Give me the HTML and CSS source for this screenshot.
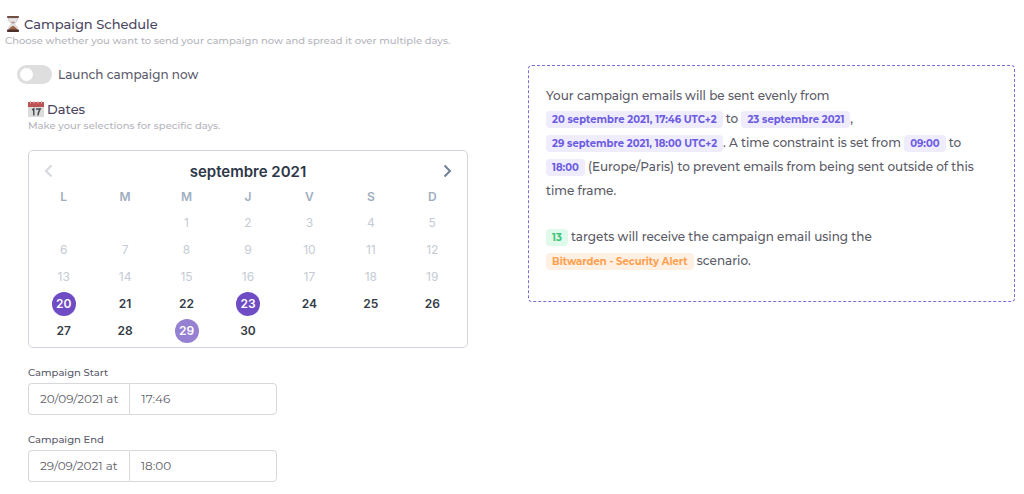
FILE: index.html
```html
<!DOCTYPE html>
<html lang="en">
<head>
    <meta charset="UTF-8">
    <meta name="viewport" content="width=device-width, initial-scale=1.0">
    <title>Campaign Schedule</title>
    <link rel="stylesheet" href="styles.css">
</head>
<body>
    <header>
        <h1 class="title">
            <svg class="icon" viewBox="0 0 16 18" aria-hidden="true">
                <path d="M3.500 3h9c0 3-1 4.200-3.500 6 2.500 1.800 3.500 3 3.500 6h-9c0-3 1-4.200 3.500-6C4.500 7.200 3.500 6 3.500 3z" fill="#e9e6e6" stroke="#b9b4b4" stroke-width=".6"/>
                <path d="M6 6.800h4c-.5.700-1 1.200-2 1.900-1-.7-1.500-1.200-2-1.900z" fill="#a58a7c"/>
                <path d="M8 10.500c.6 1.200 4 2 4.200 4.500H3.800C4 12.500 7.400 11.700 8 10.500z" fill="#9a6347"/>
                <rect x="2" y="1" width="12" height="2" rx=".8" fill="#6e5045"/>
                <rect x="2" y="14.600" width="12" height="2.400" rx=".8" fill="#4c3028"/>
            </svg>
            Campaign Schedule
        </h1>
        <p class="hint">Choose whether you want to send your campaign now and spread it over multiple days.</p>
    </header>

    <main>
        <form>
            <label class="launch">
                <input type="checkbox" class="switch">
                Launch campaign now
            </label>

            <div class="dates">
                <h2 class="title">
                    <svg class="icon" viewBox="0 0 16 18" aria-hidden="true">
                        <rect x="0" y="2" width="16" height="15" fill="#dcdcdc"/>
                        <rect x="0" y="2" width="16" height="5" fill="#bd5254"/>
                        <path d="M2.500 1v2.500M6 1v2.500M10 1v2.500M13.500 1v2.500" stroke="#e6b3b3" stroke-width="1"/>
                        <path d="M4 9.800l1.800-1v6.700M8 9h4.200c-1.300 1.800-2 3.600-2.200 6.500" fill="none" stroke="#45484d" stroke-width="1.400"/>
                    </svg>
                    Dates
                </h2>
                <p class="hint">Make your selections for specific days.</p>

                <div class="calendar">
                    <div class="month">
                        <button type="button" class="arrow" aria-label="Previous month" disabled>
                            <svg viewBox="0 0 12 14"><path d="M8.500 1.500L3 7l5.500 5.500"/></svg>
                        </button>
                        <h3>septembre 2021</h3>
                        <button type="button" class="arrow" aria-label="Next month">
                            <svg viewBox="0 0 12 14"><path d="M3.500 1.500L9 7l-5.500 5.500"/></svg>
                        </button>
                    </div>
                    <table>
                        <thead>
                            <tr><th>L</th><th>M</th><th>M</th><th>J</th><th>V</th><th>S</th><th>D</th></tr>
                        </thead>
                        <tbody id="days"></tbody>
                    </table>
                </div>

                <div class="field">
                    <label for="start">Campaign Start</label>
                    <div class="group">
                        <span class="prefix">20/09/2021 at</span>
                        <input type="text" id="start" value="17:46">
                    </div>
                </div>
                <div class="field">
                    <label for="end">Campaign End</label>
                    <div class="group">
                        <span class="prefix">29/09/2021 at</span>
                        <input type="text" id="end" value="18:00">
                    </div>
                </div>
            </div>
        </form>

        <section class="summary">
            <p>
                Your campaign emails will be sent evenly from<br>
                <span class="badge">20 septembre 2021, 17:46 UTC+2</span> to <span class="badge">23 septembre 2021</span>,<br>
                <span class="badge">29 septembre 2021, 18:00 UTC+2</span>. A time constraint is set from <span class="badge">09:00</span> to<br>
                <span class="badge">18:00</span> (Europe/Paris) to prevent emails from being sent outside of this<br>
                time frame.
            </p>
            <p>
                <span class="badge green">13</span> targets will receive the campaign email using the<br>
                <span class="badge orange">Bitwarden - Security Alert</span> scenario.
            </p>
        </section>
    </main>

    <script>
        const $days = document.querySelector("#days");
        const today = 20;
        const selected = { 20: "selected", 23: "selected", 29: "selected last" };
        // september 2021 starts on a wednesday
        for (let monday = -1; monday <= 30; monday += 7) {
            const row = $days.insertRow();
            for (let day = monday; day < monday + 7; day++) {
                const cell = row.insertCell();
                if (day < 1 || day > 30) continue;
                const button = document.createElement("button");
                button.type = "button";
                button.textContent = day;
                button.className = "day " + (selected[day] || "");
                button.disabled = day < today;
                cell.appendChild(button);
            }
        }
    </script>
</body>
</html>
```
FILE: styles.css
```css
* {
    margin: 0;
    padding: 0;
    box-sizing: border-box;
}
body {
    padding: 15px 9px 11px 5px;
    font-family: Montserrat, Inter, sans-serif;
    font-size: 12px;
    font-weight: 500;
    color: #5a5a66;
    background-color: #fff;
}
.title {
    display: flex;
    align-items: center;
    gap: 3px;
    font-size: 13px;
    font-weight: 500;
    line-height: 18px;
    color: #4b4660;
}
.icon {
    width: 16px;
    height: 18px;
}
.hint {
    font-size: 10px;
    line-height: 15px;
    color: #b4b4bc;
}
main {
    display: grid;
    grid-template-columns: 1fr 1fr;
    gap: 36px;
    align-items: start;
    margin-top: 17px;
}
.launch {
    display: flex;
    align-items: center;
    gap: 6px;
    margin-left: 12px;
    line-height: 19px;
    color: #5a5a6a;
}
.switch {
    appearance: none;
    width: 35px;
    height: 19px;
    padding: 3px;
    border-radius: 10px;
    background-color: #dedede;
}
.switch::before {
    content: "";
    display: block;
    width: 13px;
    height: 13px;
    border-radius: 50%;
    background-color: #fff;
}
.switch:checked {
    background-color: #6f4bc4;
}
.switch:checked::before {
    margin-left: auto;
}
.dates {
    margin: 16px 24px 0 23px;
}

/* calendar */
.calendar {
    margin-top: 17px;
    padding: 8px 4px 3px;
    border: 1px solid #d3d6dc;
    border-radius: 5px;
    font-family: Inter, sans-serif;
}
.month {
    display: flex;
    justify-content: space-between;
    align-items: center;
    padding: 0 10px;
    height: 24px;
}
.month h3 {
    font-size: 15px;
    font-weight: 600;
    color: #2d3748;
}
.arrow {
    display: flex;
    border: none;
    background: none;
}
.arrow svg {
    width: 12px;
    height: 14px;
    fill: none;
    stroke: #718096;
    stroke-width: 2;
}
.arrow:disabled svg {
    stroke: #d5d8dd;
}
table {
    width: 100%;
    table-layout: fixed;
    border-collapse: collapse;
}
th {
    height: 26px;
    font-size: 12px;
    font-weight: 600;
    color: #a0aec0;
}
td {
    height: 27px;
}
.day {
    display: block;
    width: 24px;
    height: 24px;
    margin: 0 auto;
    border: none;
    border-radius: 50%;
    background: none;
    font: 600 12px Inter, sans-serif;
    color: #333b47;
}
.day:disabled {
    font-weight: 400;
    color: #c5cbd4;
}
.day.selected {
    background-color: #6f4bc4;
    color: #fff;
}
.day.last {
    background-color: #9680d2;
}

/* start and end time */
.field {
    margin-top: 17px;
}
.field label {
    display: block;
    font-size: 10px;
    line-height: 16px;
    color: #5a5a6a;
}
.group {
    display: flex;
    height: 32px;
    margin-top: 2px;
}
.prefix,
.group input {
    padding: 0 11px;
    border: 1px solid #d8d8dc;
    font: 400 12px/30px Montserrat, Inter, sans-serif;
    color: #5f5f69;
}
.prefix {
    border-right: none;
    border-radius: 4px 0 0 4px;
}
.group input {
    width: 148px;
    border-radius: 0 4px 4px 0;
}

/* summary */
.summary {
    padding: 18px 17px 28px;
    border: 1px dashed #7b6fd6;
    border-radius: 4px;
    line-height: 23px;
}
.summary p + p {
    margin-top: 23px;
}
.badge {
    padding: 2px 6px;
    border-radius: 4px;
    background-color: #eeecfd;
    font-size: 10px;
    font-weight: 700;
    color: #6c5be0;
}
.badge.green {
    background-color: #dff9ea;
    color: #3fc57c;
}
.badge.orange {
    background-color: #fff0e4;
    color: #ff9f4d;
}
```
